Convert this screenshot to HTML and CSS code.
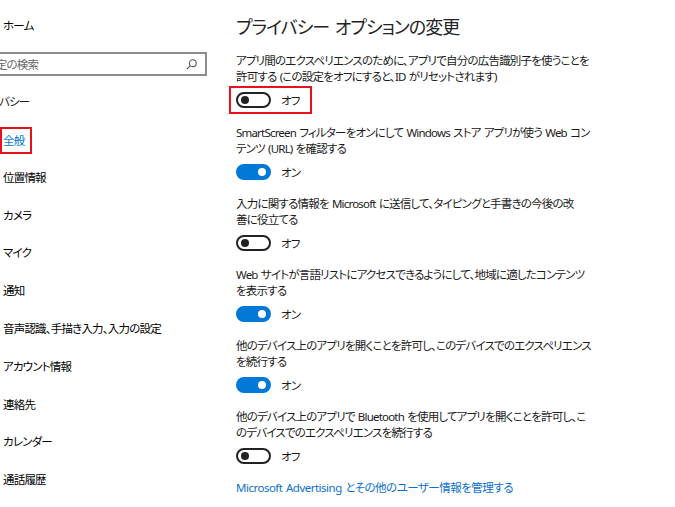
FILE: index.html
```html
<!DOCTYPE html>
<html lang="ja">
<head>
    <meta charset="UTF-8">
    <meta name="viewport" content="width=device-width, initial-scale=1.0">
    <title>プライバシー</title>
    <link rel="stylesheet" href="styles.css">
</head>
<body>
    <div class="window">
        <nav class="sidebar">
            <div class="home">ホーム</div>
            <div class="search">
                <span class="search-text">設定の検索</span>
                <svg class="search-icon" width="11" height="11" viewBox="0 0 11 11">
                    <circle cx="6.8" cy="4.2" r="3.4" fill="none" stroke="#555" stroke-width="1.1"/>
                    <line x1="4.4" y1="6.6" x2="0.8" y2="10.2" stroke="#555" stroke-width="1.2"/>
                </svg>
            </div>
            <div class="group-title">プライバシー</div>
            <ul class="nav">
                <li class="nav-item active"><span class="mark">全般</span></li>
                <li class="nav-item">位置情報</li>
                <li class="nav-item">カメラ</li>
                <li class="nav-item">マイク</li>
                <li class="nav-item">通知</li>
                <li class="nav-item">音声認識、手描き入力、入力の設定</li>
                <li class="nav-item">アカウント情報</li>
                <li class="nav-item">連絡先</li>
                <li class="nav-item">カレンダー</li>
                <li class="nav-item">通話履歴</li>
            </ul>
        </nav>

        <main class="content">
            <h1 class="title">プライバシー オプションの変更</h1>

            <div class="option">
                <p>アプリ間のエクスペリエンスのために、アプリで自分の広告識別子を使うことを<br>許可する (この設定をオフにすると、ID がリセットされます)</p>
                <div class="toggle-row mark-box">
                    <span class="toggle"></span><span class="state">オフ</span>
                </div>
            </div>

            <div class="option">
                <p>SmartScreen フィルターをオンにして Windows ストア アプリが使う Web コン<br>テンツ (URL) を確認する</p>
                <div class="toggle-row">
                    <span class="toggle on"></span><span class="state">オン</span>
                </div>
            </div>

            <div class="option">
                <p>入力に関する情報を Microsoft に送信して、タイピングと手書きの今後の改<br>善に役立てる</p>
                <div class="toggle-row">
                    <span class="toggle"></span><span class="state">オフ</span>
                </div>
            </div>

            <div class="option">
                <p>Web サイトが言語リストにアクセスできるようにして、地域に適したコンテンツ<br>を表示する</p>
                <div class="toggle-row">
                    <span class="toggle on"></span><span class="state">オン</span>
                </div>
            </div>

            <div class="option">
                <p>他のデバイス上のアプリを開くことを許可し、このデバイスでのエクスペリエンス<br>を続行する</p>
                <div class="toggle-row">
                    <span class="toggle on"></span><span class="state">オン</span>
                </div>
            </div>

            <div class="option">
                <p>他のデバイス上のアプリで Bluetooth を使用してアプリを開くことを許可し、こ<br>のデバイスでのエクスペリエンスを続行する</p>
                <div class="toggle-row">
                    <span class="toggle"></span><span class="state">オフ</span>
                </div>
            </div>

            <a class="link" href="#">Microsoft Advertising とその他のユーザー情報を管理する</a>
        </main>
    </div>
</body>
</html>
```

FILE: styles.css
```css
html, body {
    margin: 0;
    padding: 0;
    background-color: #fff;
    overflow: hidden;
}
body {
    font-family: 'Noto Sans', 'Noto Sans CJK JP', sans-serif;
    font-feature-settings: "palt";
    font-size: 11.5px;
    letter-spacing: -0.8px;
    word-spacing: 1px;
    color: #1a1a1a;
}
.window {
    display: flex;
    width: 675px;
    height: 507px;
}

/* left pane */
.sidebar {
    flex: none;
    width: 255px;
    margin-left: -45px;
    color: #000;
}
.home {
    height: 52px;
    line-height: 52px;
    padding-left: 48px;
}
.search {
    display: flex;
    align-items: center;
    justify-content: space-between;
    box-sizing: border-box;
    height: 24px;
    margin-left: 16px;
    margin-right: 3px;
    padding: 0 8px 0 12px;
    border: 2px solid #8c8c8c;
    color: #666;
}
.search-icon {
    display: block;
}
.group-title {
    height: 45px;
    line-height: 52px;
    padding-left: 16px;
    color: #222;
}
.nav {
    list-style: none;
    margin: 0;
    padding: 0;
}
.nav-item {
    height: 37.8px;
    line-height: 37.8px;
    padding-left: 48px;
    white-space: nowrap;
}
.nav-item.active {
    color: #0078d7;
}
.mark {
    display: inline-block;
    line-height: 19px;
    margin-left: -3px;
    padding: 2px 6px 2px 1px;
    border: 2px solid #e8101b;
    vertical-align: middle;
}

/* right pane */
.content {
    flex: 1;
    padding: 13px 0 0 26px;
}
.title {
    margin: 0 0 12px;
    font-size: 18px;
    font-weight: normal;
    letter-spacing: -1px;
    word-spacing: 2px;
    line-height: 28px;
    color: #222;
}
.option {
    margin-bottom: 14px;
}
.option p {
    margin: 0;
    line-height: 16px;
    white-space: nowrap;
}
.toggle-row {
    display: flex;
    align-items: center;
    height: 20px;
    margin-top: 5px;
}
.mark-box {
    display: inline-flex;
    margin: 1px 0 -4px -7px;
    padding: 2px 10px 2px 5px;
    border: 2px solid #e8101b;
}
.toggle {
    position: relative;
    box-sizing: border-box;
    width: 35px;
    height: 16px;
    border: 2px solid #222;
    border-radius: 8px;
}
.toggle::after {
    content: "";
    position: absolute;
    top: 2px;
    left: 3px;
    width: 8px;
    height: 8px;
    border-radius: 50%;
    background-color: #222;
}
.toggle.on {
    border-color: #0078d7;
    background-color: #0078d7;
}
.toggle.on::after {
    left: auto;
    right: 3px;
    background-color: #fff;
}
.state {
    margin-left: 10px;
}
.link {
    display: block;
    line-height: 16px;
    letter-spacing: -0.5px;
    color: #0a6fce;
    text-decoration: none;
}
```
